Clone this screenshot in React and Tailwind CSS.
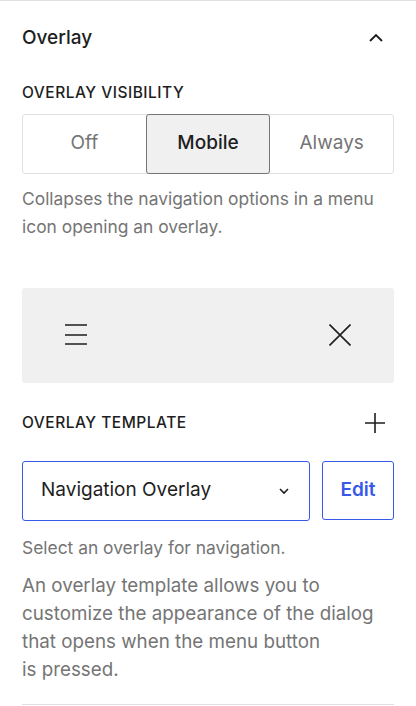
import React, { useState } from 'react';

const font = { fontFamily: 'Inter, "Noto Sans", sans-serif' };

const options = ['Off', 'Mobile', 'Always'];

export default function App() {
  const [visibility, setVisibility] = useState('Mobile');

  return (
    <div className="w-[416px] h-[706px] bg-white border-t border-[#e0e0e0] text-[#1e1e1e] overflow-hidden" style={font}>
      <div className="px-[22px]">
        {/* En-tête du panneau */}
        <div className="flex items-center justify-between h-[74px]">
          <h2 className="text-[19px] font-medium">Overlay</h2>
          <svg width="24" height="24" viewBox="0 0 24 24" className="mr-[6px]">
            <path d="M6 15l6-6 6 6" fill="none" stroke="#1e1e1e" strokeWidth="1.8" />
          </svg>
        </div>

        <div className="text-[15.5px] font-medium uppercase tracking-[0.5px] leading-none mt-[10px]">Overlay visibility</div>

        {/* Contrôle segmenté */}
        <div className="flex mt-[13px] h-[60px] border border-[#e0e0e0] rounded-[3px]">
          {options.map((opt) => (
            <button
              key={opt}
              onClick={() => setVisibility(opt)}
              className={
                visibility === opt
                  ? 'flex-1 -my-px border border-[#757575] bg-[#f0f0f0] rounded-[3px] text-[19px] font-medium text-[#1e1e1e]'
                  : 'flex-1 text-[19px] text-[#757575]'
              }
            >
              {opt}
            </button>
          ))}
        </div>

        <p className="text-[17.4px] leading-[28px] text-[#757575] mt-[11px]">
          Collapses the navigation options in a menu icon opening an overlay.
        </p>

        {/* Aperçu */}
        <div className="mt-[47px] h-[95px] bg-[#f0f0f0] rounded-[3px] flex items-center justify-between pl-[43px] pr-[43px]">
          <svg width="22" height="22" viewBox="0 0 22 22">
            <path d="M0 1h22M0 11h22M0 20h22" stroke="#1e1e1e" strokeWidth="1.6" />
          </svg>
          <svg width="22" height="22" viewBox="0 0 22 22">
            <path d="M0.5 0.5l21 21M21.5 0.5l-21 21" stroke="#1e1e1e" strokeWidth="1.6" />
          </svg>
        </div>

        {/* Modèle */}
        <div className="flex items-center justify-between mt-[30px] h-[20px]">
          <div className="text-[15.5px] font-medium uppercase tracking-[0.5px] leading-none">Overlay template</div>
          <svg width="20" height="20" viewBox="0 0 20 20" className="mr-[9px]">
            <path d="M10 0v20M0 10h20" stroke="#1e1e1e" strokeWidth="1.6" />
          </svg>
        </div>

        <div className="flex gap-[12px] mt-[28px]">
          <div className="flex-1 h-[60px] border border-[#3858e9] rounded-[3px] flex items-center justify-between pl-[18px] pr-[18px]">
            <span className="text-[19px]">Navigation Overlay</span>
            <svg width="14" height="14" viewBox="0 0 14 14">
              <path d="M3 5l4 4 4-4" fill="none" stroke="#1e1e1e" strokeWidth="1.6" />
            </svg>
          </div>
          <button className="w-[72px] h-[59px] border border-[#3858e9] rounded-[3px] text-[#3858e9] text-[19px] font-semibold">
            Edit
          </button>
        </div>

        <p className="text-[17.4px] leading-[28px] text-[#757575] mt-[13px]">Select an overlay for navigation.</p>
        <p className="text-[18.8px] leading-[28px] text-[#757575] mt-[10px]">
          An overlay template allows you to<br />
          customize the appearance of the dialog<br />
          that opens when the menu button<br />
          is pressed.
        </p>

        <div className="border-t border-[#e0e0e0] mt-[20px]"></div>
      </div>
    </div>
  );
}
